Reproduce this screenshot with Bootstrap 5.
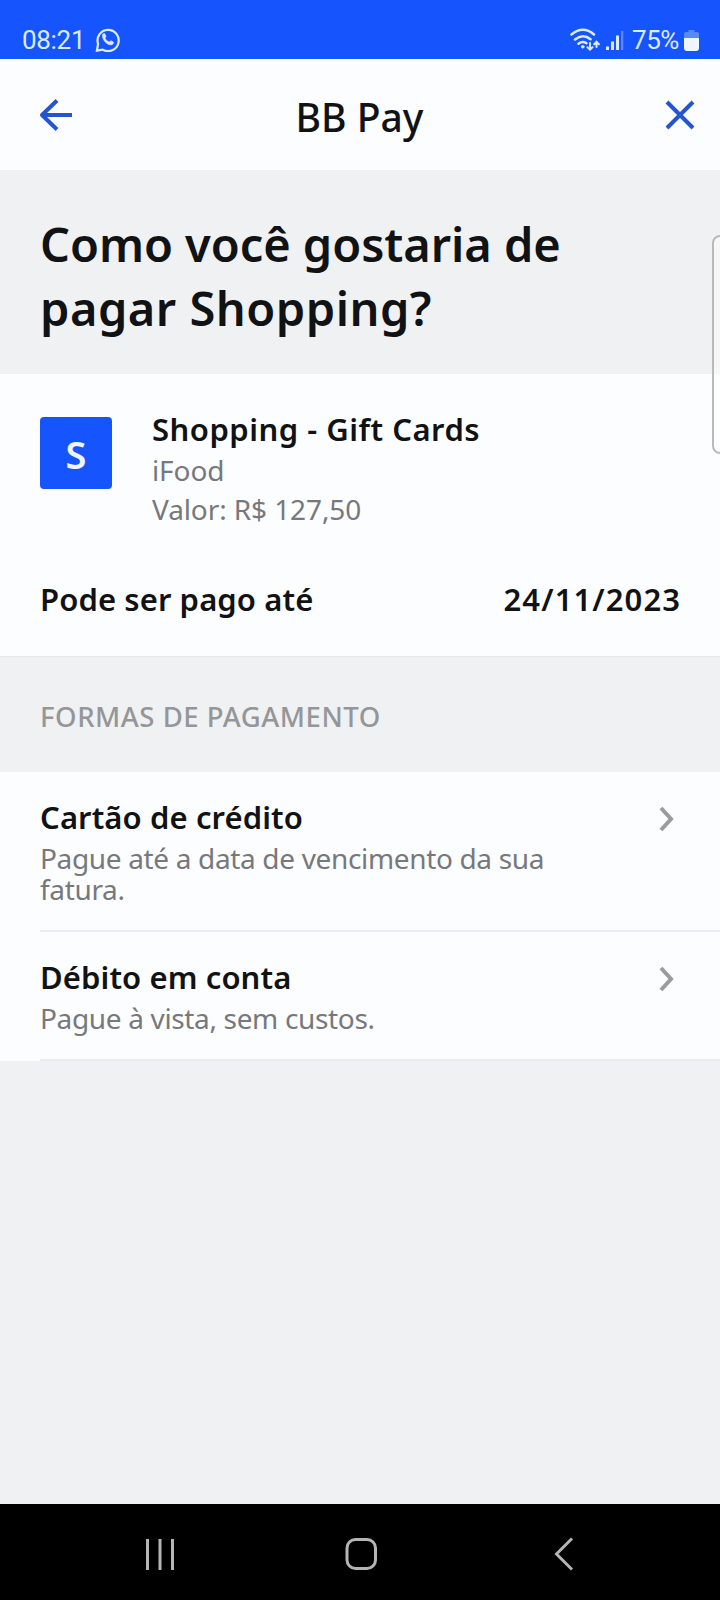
<!DOCTYPE html>
<html lang="pt-BR">
<head>
<meta charset="utf-8">
<meta name="viewport" content="width=device-width, initial-scale=1">
<title>BB Pay</title>
<link href="https://cdn.jsdelivr.net/npm/bootstrap@5.3.0/dist/css/bootstrap.min.css" rel="stylesheet">
<style>
  body { font-family: "Noto Sans", sans-serif; background: #f0f1f3; color: #111214; }
  .screen { width: 720px; height: 1600px; background: #f0f1f3; }
  .surface { background: #fcfdfe; }
  .status-bar { height: 59px; background: #1655fd; color: #dcebff; font: 400 26px/30px Roboto, sans-serif; padding: 25px 20px 0 22px; }
  .clock { letter-spacing: -.3px; }
  .battery-text { letter-spacing: -.4px; }
  .icon-chat { margin: 2px 0 0 10px; }
  .icon-wifi { margin: 3px 5px 0 0; }
  .icon-signal { margin: 4px 8px 0 0; }
  .icon-battery { margin: 5px 1px 0 5px; }
  .app-bar { height: 111px; padding: 0 24px 0 38px; }
  .app-title { font-size: 39px; line-height: 48px; font-weight: 500; padding: 5px 19px 0 0; }
  .hero { height: 204px; padding: 42px 40px 0; }
  .hero h1 { font-size: 47px; line-height: 64px; font-weight: 600; letter-spacing: -.05px; }
  .hero .wide { letter-spacing: .5px; }
  .summary { height: 282px; padding: 35px 40px 0; }
  .avatar { width: 72px; height: 72px; margin: 8px 40px 0 0; border-radius: 4px; background: #1655fd; color: #eff6ff; font-size: 38px; font-weight: 600; line-height: 74px; }
  .label { font-size: 31px; line-height: 40px; font-weight: 600; letter-spacing: .1px; }
  .product { line-height: 41px; letter-spacing: .5px; margin-bottom: 1px; }
  .date { letter-spacing: 1.1px; margin-right: -1.1px; }
  .detail { font-size: 28px; line-height: 39px; color: #77787b; letter-spacing: -.1px; }
  .due { margin-top: 50px; }
  .section-title { height: 116px; padding: 40px 40px 0; font-size: 27.5px; line-height: 39px; font-weight: 500; letter-spacing: .53px; color: #959698; border-top: 1px solid #e8e9eb; }
  .methods { height: 289px; }
  .method { margin-left: 40px; padding: 25px 45px 0 0; border-bottom: 2px solid #ebecef; color: inherit; text-decoration: none; }
  .method-tall { height: 160px; }
  .method-short { height: 129px; }
  .method p { font-size: 28px; line-height: 31px; letter-spacing: -.34px; color: #77787b; margin: 6px 0 0; width: 530px; }
  .chevron { margin-top: 9px; }
  .nav-bar { height: 96px; background: #000; }
  .edge-handle { left: 712px; top: 235px; width: 16px; height: 219px; border: 2px solid #b9babc; border-radius: 9px; background: rgba(255,255,255,.45); }
  svg { display: block; flex: none; }
</style>
</head>
<body>
<div class="screen position-relative overflow-hidden d-flex flex-column">
  <header class="status-bar d-flex justify-content-between">
    <div class="d-flex">
      <span class="clock">08:21</span>
      <svg class="icon-chat" width="25" height="25" viewBox="0 0 26 26" fill="none" stroke="#dcebff"><path d="M2 24.500l1.200-7A11 11 0 1 1 8 23.500z" stroke-width="2.300"/><path d="M8 7.500c.8-1 2-1 2.400-.2l1 2.300c.3.8-1.200 1.600-.9 2.200 1 1.800 2.400 3 4.100 3.800.6.3 1.500-1.500 2.200-1.200l2.200 1.100c.8.5-.2 2.700-1.800 3C13 19.400 6.600 13 8 7.500z" fill="#dcebff" stroke="#dcebff" stroke-width=".6"/></svg>
    </div>
    <div class="d-flex">
      <svg class="icon-wifi" width="30" height="26" viewBox="0 0 30 26" fill="none" stroke="#dcebff" stroke-width="2.500" stroke-linecap="round"><path d="M1.500 6.500Q13-3 24 6.500M5 11.500q8-6.500 15.500-.3M8.500 15.700q4-3 8-.5"/><circle cx="12.700" cy="18.800" r="1.300" fill="#dcebff" stroke-width="1"/><path d="M20 15v6.500m-2.500-2.300L20 21.700l2.500-2.500M26.500 19v-5m-2.300 2.200 2.300-2.500 2.300 2.500" stroke-width="2"/></svg>
      <svg class="icon-signal" width="19" height="22" viewBox="0 0 19 22" fill="#dcebff"><path d="M1 17.500h3V21H1zM6 12.500h3V21H6zM11 6.500h3V21h-3z"/><path d="M16 2h2.300v19H16z" opacity=".35"/></svg>
      <span class="battery-text">75%</span>
      <svg class="icon-battery" width="15" height="22" viewBox="0 0 15 22"><path d="M4.500 0h6v2H13q2 0 2 2v4H0V4q0-2 2-2h2.500z" fill="#9dbdff" opacity=".5"/><path d="M0 8h15v10q0 3-3 3H3q-3 0-3-3z" fill="#eff6ff"/></svg>
    </div>
  </header>

  <nav class="app-bar surface d-flex align-items-center justify-content-between">
    <svg width="36" height="36" viewBox="0 0 36 36" fill="none" stroke="#2455cf" stroke-width="4"><path d="M34 18H4M19 3.500 4 18l15 14.500" stroke-linejoin="round"/></svg>
    <div class="app-title">BB Pay</div>
    <svg width="32" height="32" viewBox="0 0 32 32" fill="none" stroke="#2455cf" stroke-width="4"><path d="M3 3l26 26M29 3 3 29"/></svg>
  </nav>

  <section class="hero"><h1 class="m-0">Como você gostaria de<br><span class="wide">pagar Shopping?</span></h1></section>

  <section class="summary surface">
    <div class="d-flex align-items-start">
      <div class="avatar text-center">S</div>
      <div>
        <div class="label product">Shopping - Gift Cards</div>
        <div class="detail">iFood</div>
        <div class="detail">Valor: R$ 127,50</div>
      </div>
    </div>
    <div class="due label d-flex justify-content-between"><span>Pode ser pago até</span><span class="date">24/11/2023</span></div>
  </section>

  <div class="section-title">FORMAS DE PAGAMENTO</div>

  <section class="methods surface">
    <a class="method method-tall d-flex justify-content-between">
      <div><div class="label">Cartão de crédito</div><p>Pague até a data de vencimento da sua fatura.</p></div>
      <svg class="chevron" width="16" height="26" viewBox="0 0 16 26" fill="none" stroke="#999b9e" stroke-width="4"><path d="M2 2l10 11L2 24"/></svg>
    </a>
    <a class="method method-short d-flex justify-content-between">
      <div><div class="label">Débito em conta</div><p>Pague à vista, sem custos.</p></div>
      <svg class="chevron" width="16" height="26" viewBox="0 0 16 26" fill="none" stroke="#999b9e" stroke-width="4"><path d="M2 2l10 11L2 24"/></svg>
    </a>
  </section>

  <footer class="nav-bar mt-auto">
    <svg width="720" height="96" viewBox="0 0 720 96" fill="none" stroke="#b5b5b5" stroke-width="3"><path d="M147.500 35v31M160 35v31M172.500 35v31"/><rect x="347" y="35.500" width="28.500" height="29" rx="8.500"/><path d="M572 34.500 556.500 50 572 65.500"/></svg>
  </footer>

  <div class="edge-handle position-absolute"></div>
</div>
<script src="https://cdn.jsdelivr.net/npm/bootstrap@5.3.0/dist/js/bootstrap.bundle.min.js"></script>
</body>
</html>
